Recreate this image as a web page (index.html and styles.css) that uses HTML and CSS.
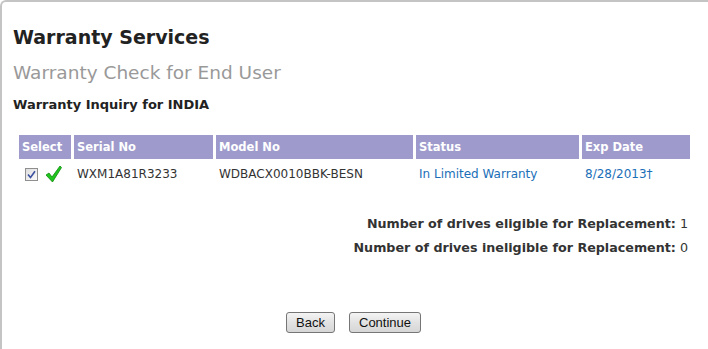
FILE: index.html
```html
<!DOCTYPE html>
<html lang="en">
<head>
  <meta charset="UTF-8">
  <title>Warranty Services</title>
  <link rel="stylesheet" href="styles.css">
</head>
<body>
  <div class="frame">
    <h1>Warranty Services</h1>
    <h2>Warranty Check for End User</h2>
    <h3>Warranty Inquiry for INDIA</h3>

    <table class="results">
      <thead>
        <tr>
          <th class="col-select">Select</th>
          <th class="col-serial">Serial No</th>
          <th class="col-model">Model No</th>
          <th class="col-status">Status</th>
          <th class="col-exp">Exp Date</th>
        </tr>
      </thead>
      <tbody>
        <tr>
          <td class="select-cell">
            <span class="checkbox">
              <svg width="9" height="9" viewBox="0 0 9 9">
                <path d="M1 4.5 L3.5 7.5 L8 1.2" fill="none" stroke="#3a4fa0" stroke-width="1.6"/>
              </svg>
            </span>
            <svg class="tick" width="17" height="18" viewBox="0 0 17 18">
              <path d="M1 10 L4 8 L7 12 L15 1 L16.5 2.5 L7.5 17 Z" fill="#1fc41f" stroke="#0c8a0c" stroke-width="0.8" stroke-linejoin="round"/>
            </svg>
          </td>
          <td>WXM1A81R3233</td>
          <td>WDBACX0010BBK-BESN</td>
          <td class="link">In Limited Warranty</td>
          <td class="link">8/28/2013†</td>
        </tr>
      </tbody>
    </table>

    <div class="summary">
      <p><b>Number of drives eligible for Replacement:</b> 1</p>
      <p><b>Number of drives ineligible for Replacement:</b> 0</p>
    </div>

    <div class="actions">
      <button>Back</button>
      <button>Continue</button>
    </div>
  </div>
</body>
</html>
```

FILE: styles.css
```css
body {
  margin: 0;
  font-family: "DejaVu Sans", Verdana, sans-serif;
  color: #333;
}
.frame {
  height: 347px;
  border-top: 2px solid #c4c4c4;
  border-left: 2px solid #c4c4c4;
  border-top-left-radius: 6px;
  padding: 0 0 0 11px;
}
h1 {
  margin: 0;
  padding-top: 22px;
  font-size: 19px;
  line-height: 26px;
  color: #222;
}
h2 {
  margin: 11px 0 0;
  font-size: 18.5px;
  font-weight: normal;
  line-height: 24px;
  color: #999;
}
h3 {
  margin: 12px 0 0;
  font-size: 13px;
  line-height: 16px;
  color: #222;
}
.results {
  margin: 22px 0 0 3px;
  border-spacing: 3px 0;
  font-size: 12px;
}
.results th {
  background: #9e9bcc;
  color: #fff;
  text-align: left;
  height: 24px;
  padding: 0 3px;
  font-size: 11.5px;
}
.col-select { width: 46px; }
.col-serial { width: 133px; }
.col-model { width: 191px; }
.col-status { width: 157px; }
.col-exp { width: 102px; }
.results td {
  height: 30px;
  padding: 0 3px;
  color: #333;
}
.select-cell {
  white-space: nowrap;
}
.checkbox {
  display: inline-flex;
  align-items: center;
  justify-content: center;
  box-sizing: border-box;
  width: 13px;
  height: 13px;
  margin: 0 3px 0 3px;
  border: 1px solid #8f8f8f;
  background: linear-gradient(135deg, #dedede, #fbfbfb);
  vertical-align: middle;
}
.tick {
  vertical-align: middle;
}
.results td.link {
  color: #1b6fb8;
}
.summary {
  margin-top: 27px;
  width: 675px;
  text-align: right;
  font-size: 12.7px;
  color: #333;
}
.summary p {
  margin: 0 0 8px;
  line-height: 16px;
}
.actions {
  margin-top: 56px;
  padding-left: 273px;
}
.actions button {
  font-family: "Liberation Sans", Arial, sans-serif;
  font-size: 13px;
  color: #111;
  height: 21px;
  padding: 0 9px;
  margin-right: 9px;
  border: 1px solid #767676;
  border-radius: 3px;
  background: linear-gradient(#f4f4f4, #e2e2e2 50%, #d6d6d6);
}
```
